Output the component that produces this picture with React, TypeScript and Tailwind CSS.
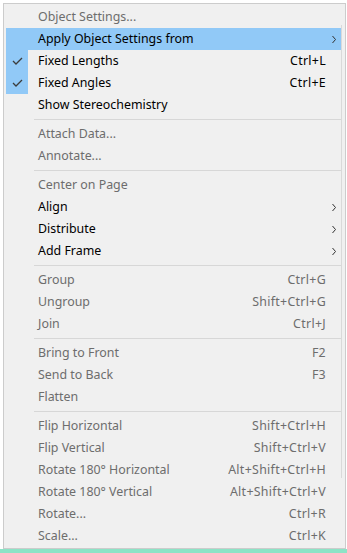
import React from "react";

type Item =
  | { sep: true }
  | { label: string; shortcut?: string; off?: boolean; checked?: boolean; sub?: boolean; hot?: boolean; sep?: false };

const ITEMS: Item[] = [
  { label: "Object Settings...", off: true },
  { label: "Apply Object Settings from", sub: true, hot: true },
  { label: "Fixed Lengths", shortcut: "Ctrl+L", checked: true },
  { label: "Fixed Angles", shortcut: "Ctrl+E", checked: true },
  { label: "Show Stereochemistry" },
  { sep: true },
  { label: "Attach Data...", off: true },
  { label: "Annotate...", off: true },
  { sep: true },
  { label: "Center on Page", off: true },
  { label: "Align", sub: true },
  { label: "Distribute", sub: true },
  { label: "Add Frame", sub: true },
  { sep: true },
  { label: "Group", shortcut: "Ctrl+G", off: true },
  { label: "Ungroup", shortcut: "Shift+Ctrl+G", off: true },
  { label: "Join", shortcut: "Ctrl+J", off: true },
  { sep: true },
  { label: "Bring to Front", shortcut: "F2", off: true },
  { label: "Send to Back", shortcut: "F3", off: true },
  { label: "Flatten", off: true },
  { sep: true },
  { label: "Flip Horizontal", shortcut: "Shift+Ctrl+H", off: true },
  { label: "Flip Vertical", shortcut: "Shift+Ctrl+V", off: true },
  { label: "Rotate 180° Horizontal", shortcut: "Alt+Shift+Ctrl+H", off: true },
  { label: "Rotate 180° Vertical", shortcut: "Alt+Shift+Ctrl+V", off: true },
  { label: "Rotate...", shortcut: "Ctrl+R", off: true },
  { label: "Scale...", shortcut: "Ctrl+K", off: true },
];

function Check() {
  return (
    <svg width="22" height="22" viewBox="0 0 22 22">
      <polyline points="7,11 10,14 16,8" fill="none" stroke="#3c3c3c" strokeWidth="1.3" />
    </svg>
  );
}

function Chevron() {
  return (
    <svg width="6" height="9" viewBox="0 0 6 9">
      <polyline points="1.5,1 4.5,4.5 1.5,8" fill="none" stroke="#333" strokeWidth="1" />
    </svg>
  );
}

function Row({ item }: { item: Exclude<Item, { sep: true }> }) {
  const color = item.off ? "text-[#6d6d6d]" : "text-black";
  return (
    <div className={`flex h-[22px] items-center ${item.hot ? "bg-[#91c9f7]" : ""}`}>
      <div className="flex h-[22px] w-[32px] shrink-0 items-center">
        {item.checked && (
          <div className="flex h-[22px] w-[22px] items-center justify-center bg-[#91c9f7]">
            <Check />
          </div>
        )}
      </div>
      <span className={`flex-1 whitespace-nowrap ${color}`}>{item.label}</span>
      {item.shortcut && (
        <span className={`whitespace-nowrap tracking-[0.3px] ${color}`}>{item.shortcut}</span>
      )}
      <div className="flex w-[15px] shrink-0 items-center justify-center">{item.sub && <Chevron />}</div>
    </div>
  );
}

export default function App() {
  return (
    <div
      className="flex h-[553px] w-[347px] flex-col overflow-hidden bg-white text-[12.4px] leading-[22px]"
      style={{ fontFamily: '"Noto Sans", "Open Sans", sans-serif' }}
    >
      <div className="relative ml-[3px] mt-[3px] w-[343px] border border-[#cccccc] bg-[#f0f0f0] pb-[1px] pl-[2px] pr-[4px] pt-[2px]">
        {ITEMS.map((it, i) =>
          it.sep ? (
            <div key={i} className="flex h-[7px] items-center pl-[28px]">
              <div className="h-px w-full bg-[#d7d7d7]" />
            </div>
          ) : (
            <Row key={i} item={it} />
          )
        )}
        <div className="absolute right-[3px] top-[21px] h-[453px] w-px bg-[#d9d9d9]" />
      </div>
      <div className="h-[6px] w-full bg-[#8de3c6]" />
    </div>
  );
}
